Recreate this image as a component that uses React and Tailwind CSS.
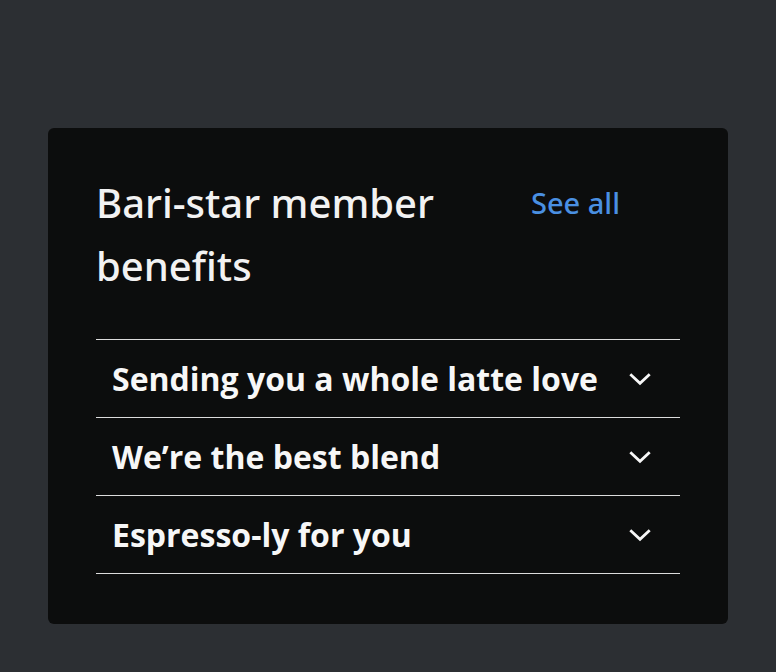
import React from "react";

function Chevron() {
  return (
    <svg width="26" height="26" viewBox="0 0 24 24" fill="none" stroke="currentColor" strokeWidth="2.6" strokeLinecap="square" strokeLinejoin="miter">
      <path d="M4 8.5l8 7.5 8-7.5" />
    </svg>
  );
}

const items = [
  "Sending you a whole latte love",
  "We’re the best blend",
  "Espresso-ly for you",
];

export default function App() {
  return (
    <div className="min-h-[672px] w-full bg-[#2c2f33] pt-[128px] px-[48px]" style={{ fontFamily: '"Open Sans", "Noto Sans", sans-serif' }}>
      <div className="w-[680px] h-[496px] rounded-[6px] bg-[#0c0d0d] px-[48px] pt-[43px]">
        <div className="flex items-start font-['Noto_Sans',sans-serif]">
          <h2 className="flex-1 text-[40px] leading-[63px] font-medium text-[#f2f2f2]">Bari-star member benefits</h2>
          <a className="mr-[60px] ml-[20px] text-[29px] leading-[63px] font-medium text-[#4a90e2]">See all</a>
        </div>
        <div className="mt-[42px] border-t border-[#dcdcdc]">
          {items.map((t) => (
            <div key={t} className="flex items-center justify-between h-[78px] border-b border-[#dcdcdc] pl-[16px] pr-[27px] text-[#f7f7f7]">
              <span className="text-[32px] font-bold">{t}</span>
              <Chevron />
            </div>
          ))}
        </div>
      </div>
    </div>
  );
}
